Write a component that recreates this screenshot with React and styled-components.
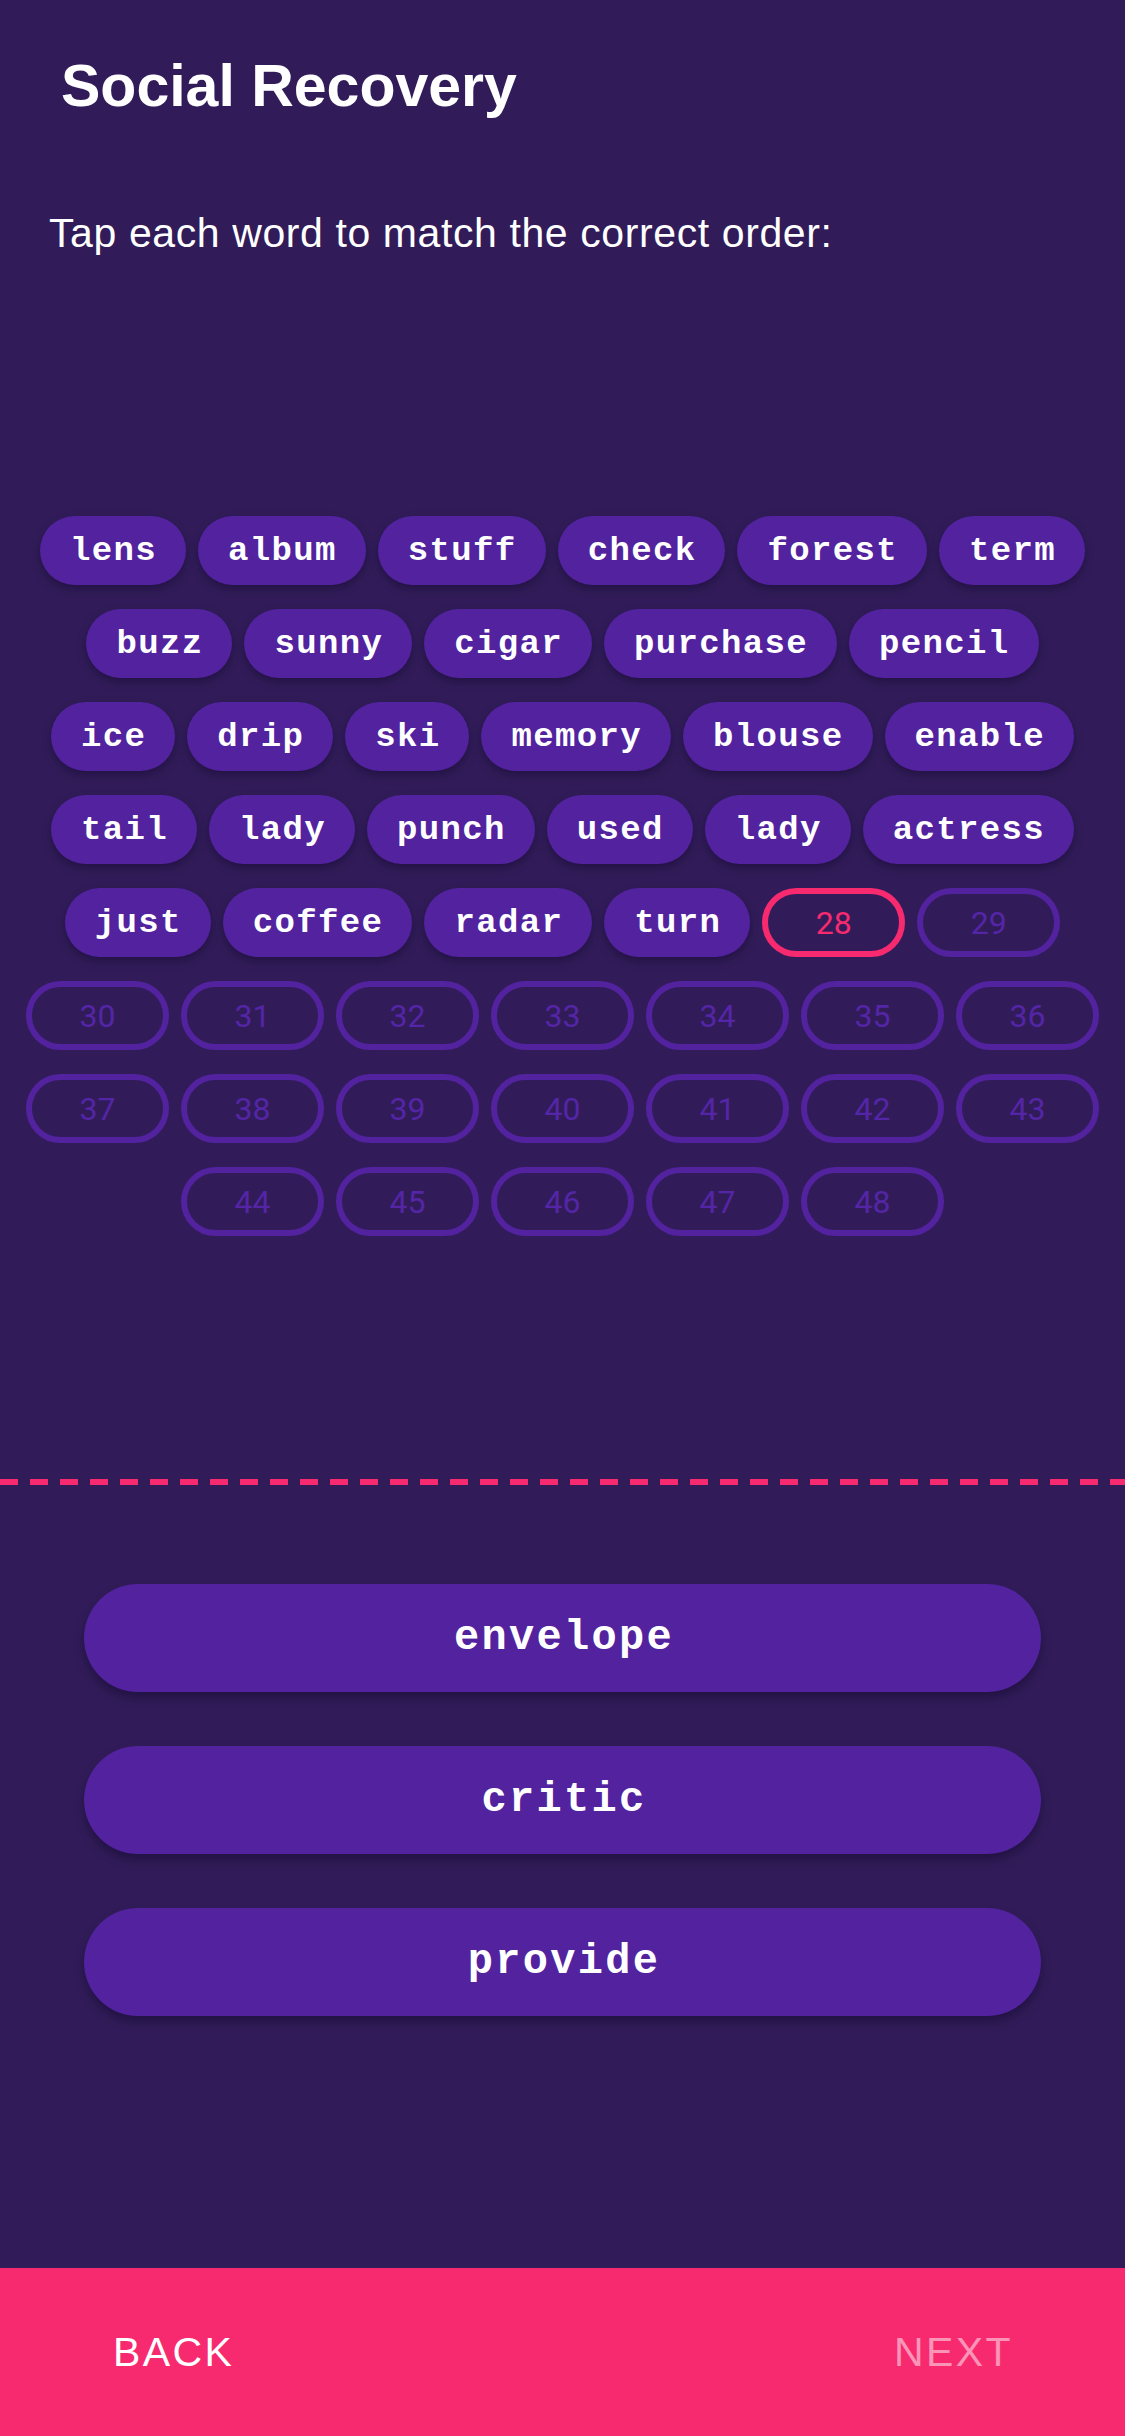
import React from "react";
import styled, { createGlobalStyle } from "styled-components";

const Global = createGlobalStyle`
  html, body { margin: 0; padding: 0; background: #311c59; }
  * { box-sizing: border-box; }
`;

const Screen = styled.div`
  min-height: 100vh;
  display: flex;
  flex-direction: column;
  background: #311c59;
  font-family: "Liberation Sans", Arial, sans-serif;
`;

const Title = styled.h1`
  margin: 57px 0 0 61px;
  font-size: 59px;
  line-height: 1;
  font-weight: 700;
  color: #ffffff;
`;

const Subtitle = styled.p`
  margin: 97px 0 0 49px;
  font-size: 41px;
  line-height: 1;
  letter-spacing: 0.6px;
  color: #ffffff;
`;

const WordGrid = styled.div`
  margin-top: 262px;
  padding: 0 20px;
  display: flex;
  flex-wrap: wrap;
  justify-content: center;
  gap: 24px 12px;
`;

const WordChip = styled.div`
  height: 69px;
  padding: 0 29px 0 30px;
  border-radius: 35px;
  background: #52229f;
  box-shadow: 0 4px 8px rgba(10, 0, 30, 0.35);
  display: flex;
  align-items: center;
  justify-content: center;
  font-family: "Liberation Mono", "Courier New", monospace;
  font-weight: 700;
  font-size: 34px;
  letter-spacing: 1.35px;
  color: #ffffff;
  white-space: nowrap;
`;

const SlotChip = styled.div`
  width: 143px;
  height: 69px;
  border-radius: 35px;
  border: 6px solid ${(p) => (p.$active ? "#f72a6f" : "#52229f")};
  display: flex;
  align-items: center;
  justify-content: center;
  font-family: Roboto, "Liberation Sans", sans-serif;
  font-size: 32px;
  color: ${(p) => (p.$active ? "#f72a6f" : "#5425a6")};
`;

const Divider = styled.div`
  margin-top: 243px;
  height: 6px;
  background: repeating-linear-gradient(
    to right,
    #f72a6f 0,
    #f72a6f 18px,
    transparent 18px,
    transparent 30px
  );
`;

const Choices = styled.div`
  margin: 99px 84px 0;
  display: flex;
  flex-direction: column;
  gap: 54px;
`;

const ChoiceButton = styled.div`
  height: 108px;
  padding-left: 3px;
  border-radius: 54px;
  background: #52229f;
  box-shadow: 0 6px 10px rgba(10, 0, 30, 0.35);
  display: flex;
  align-items: center;
  justify-content: center;
  font-family: "Liberation Mono", "Courier New", monospace;
  font-weight: 700;
  font-size: 42px;
  letter-spacing: 2.3px;
  color: #ffffff;
`;

const Footer = styled.div`
  margin-top: auto;
  height: 168px;
  background: #f72a6f;
  display: flex;
  align-items: center;
  justify-content: space-between;
  padding: 0 112px 0 113px;
`;

const FooterButton = styled.div`
  font-family: "Liberation Sans", Arial, sans-serif;
  font-size: 41px;
  font-weight: 400;
  letter-spacing: 2.4px;
  color: ${(p) => (p.$disabled ? "rgba(255,255,255,0.5)" : "#ffffff")};
`;

const words = [
  "lens", "album", "stuff", "check", "forest", "term",
  "buzz", "sunny", "cigar", "purchase", "pencil",
  "ice", "drip", "ski", "memory", "blouse", "enable",
  "tail", "lady", "punch", "used", "lady", "actress",
  "just", "coffee", "radar", "turn",
];

const slots = Array.from({ length: 21 }, (_, i) => 28 + i);

export default function App() {
  return (
    <Screen>
      <Global />
      <Title>Social Recovery</Title>
      <Subtitle>Tap each word to match the correct order:</Subtitle>
      <WordGrid>
        {words.map((w, i) => (
          <WordChip key={i}>{w}</WordChip>
        ))}
        {slots.map((n) => (
          <SlotChip key={n} $active={n === 28}>
            {n}
          </SlotChip>
        ))}
      </WordGrid>
      <Divider />
      <Choices>
        <ChoiceButton>envelope</ChoiceButton>
        <ChoiceButton>critic</ChoiceButton>
        <ChoiceButton>provide</ChoiceButton>
      </Choices>
      <Footer>
        <FooterButton>BACK</FooterButton>
        <FooterButton $disabled>NEXT</FooterButton>
      </Footer>
    </Screen>
  );
}
